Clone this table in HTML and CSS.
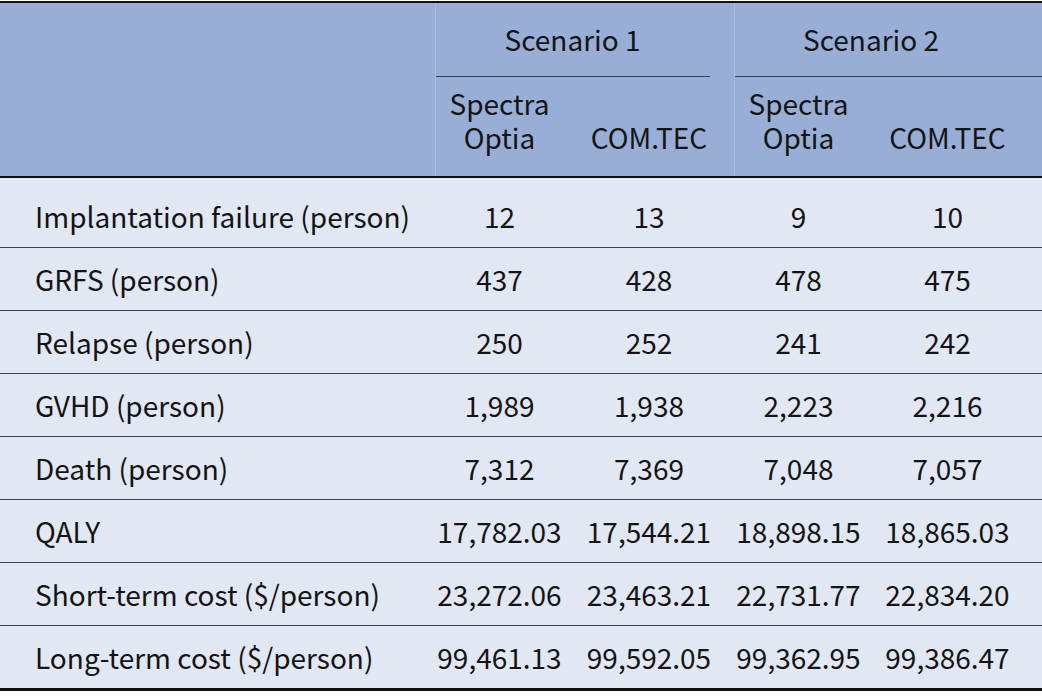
FILE: index.html
```html
<!DOCTYPE html>
<html lang="en">
<head>
<meta charset="utf-8">
<title>Scenario results</title>
<link rel="stylesheet" href="styles.css">
</head>
<body>
<div class="table">
  <div class="head">
    <div class="corner"></div>
    <div class="scen scen1">Scenario 1</div>
    <div class="scen scen2">Scenario 2</div>
    <div class="sub c1 sep"><span class="txt wrap">Spectra Optia</span></div>
    <div class="sub c2"><span class="txt">COM.TEC</span></div>
    <div class="sub c3 sep"><span class="txt wrap">Spectra Optia</span></div>
    <div class="sub c4"><span class="txt">COM.TEC</span></div>
  </div>
  <div class="row first"><div class="label">Implantation failure (person)</div><div class="num c1">12</div><div class="num c2">13</div><div class="num c3">9</div><div class="num c4">10</div></div>
  <div class="row"><div class="label">GRFS (person)</div><div class="num c1">437</div><div class="num c2">428</div><div class="num c3">478</div><div class="num c4">475</div></div>
  <div class="row"><div class="label">Relapse (person)</div><div class="num c1">250</div><div class="num c2">252</div><div class="num c3">241</div><div class="num c4">242</div></div>
  <div class="row"><div class="label">GVHD (person)</div><div class="num c1">1,989</div><div class="num c2">1,938</div><div class="num c3">2,223</div><div class="num c4">2,216</div></div>
  <div class="row"><div class="label">Death (person)</div><div class="num c1">7,312</div><div class="num c2">7,369</div><div class="num c3">7,048</div><div class="num c4">7,057</div></div>
  <div class="row"><div class="label">QALY</div><div class="num c1">17,782.03</div><div class="num c2">17,544.21</div><div class="num c3">18,898.15</div><div class="num c4">18,865.03</div></div>
  <div class="row"><div class="label">Short-term cost ($/person)</div><div class="num c1">23,272.06</div><div class="num c2">23,463.21</div><div class="num c3">22,731.77</div><div class="num c4">22,834.20</div></div>
  <div class="row last"><div class="label">Long-term cost ($/person)</div><div class="num c1">99,461.13</div><div class="num c2">99,592.05</div><div class="num c3">99,362.95</div><div class="num c4">99,386.47</div></div>
</div>
</body>
</html>
```
FILE: styles.css
```css
html, body {
  margin: 0;
  padding: 0;
  background: #ffffff;
}
body {
  padding-top: 1px;
  font-family: "Noto Sans CJK SC", "Noto Sans", sans-serif;
  font-size: 28px;
  color: #141414;
}
.table {
  width: 1042px;
}
.head {
  display: grid;
  grid-template-columns: 435px 149px 150px 149px 159px;
  grid-template-rows: 74px 99px;
  background: #98aed6;
  border-top: 2px solid #111111;
  border-bottom: 2px solid #111111;
}
.corner {
  grid-row: 1 / 3;
  grid-column: 1;
}
.scen {
  display: flex;
  align-items: center;
  justify-content: center;
  line-height: 1;
  padding-bottom: 2px;
  box-shadow: inset 1px 0 0 #a9bde0;
}
.scen1 {
  grid-column: 2 / 4;
  padding-right: 24px;
  background: linear-gradient(#3a3f4a, #3a3f4a) no-repeat left bottom / calc(100% - 24px) 1px;
}
.scen2 {
  grid-column: 4 / 6;
  padding-right: 34px;
  background: linear-gradient(#3a3f4a, #3a3f4a) no-repeat left bottom / 100% 1px;
}
.sub {
  display: flex;
  align-items: flex-end;
  justify-content: center;
  text-align: center;
  padding-bottom: 22px;
}
.txt {
  display: block;
  line-height: 34px;
  white-space: nowrap;
}
.txt.wrap {
  max-width: 112px;
  white-space: normal;
}
.sep {
  box-shadow: inset 1px 0 0 #a9bde0;
}
.c1, .c2, .c3 {
  padding-right: 20px;
}
.c4 {
  padding-right: 30px;
}
.row {
  display: grid;
  grid-template-columns: 435px 149px 150px 149px 159px;
  align-items: center;
  box-sizing: border-box;
  height: 63px;
  background: #e1e7f3;
  border-top: 1px solid #3d4450;
  line-height: 1;
}
.row.first {
  height: 69px;
  border-top: none;
  padding-top: 6px;
}
.row.last {
  border-bottom: 3px solid #111111;
  height: 66px;
}
.label {
  padding-left: 35px;
}
.num {
  text-align: center;
}
```
